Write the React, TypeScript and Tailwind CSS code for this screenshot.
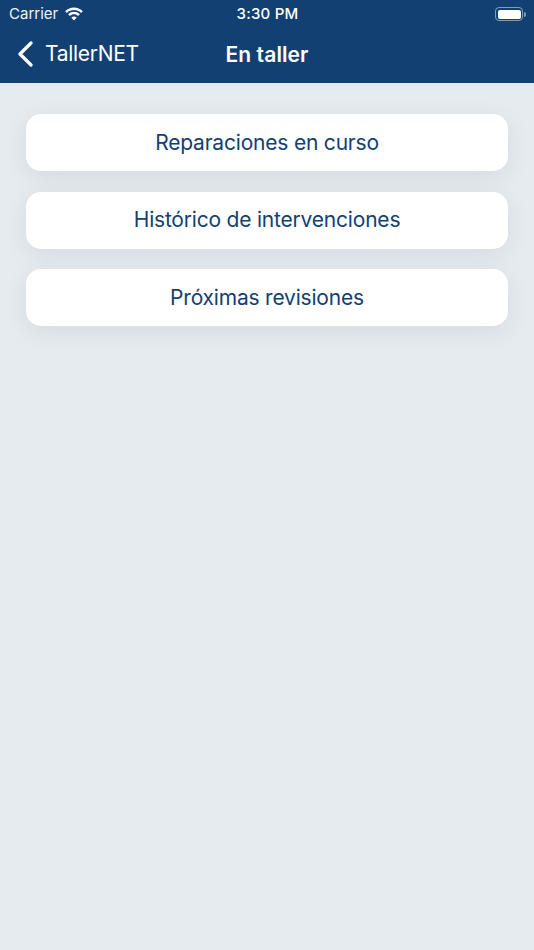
import React from "react";

const OPTIONS = ["Reparaciones en curso", "Histórico de intervenciones", "Próximas revisiones"];

function Wifi() {
	return (
		<svg width="20" height="15" viewBox="0 0 20 15" fill="#fff">
			<path d="M10 3.1c2.7 0 5.2 1 7.1 2.8l1.5-1.5c.1-.1.1-.3 0-.4C16.300 1.700 13.200.5 10 .5S3.700 1.700 1.400 4c-.1.1-.1.300 0 .4l1.500 1.500C4.800 4.100 7.300 3.100 10 3.100z" />
			<path d="M10 7.300c1.600 0 3 .6 4.100 1.600l1.500-1.500c.1-.1.1-.3 0-.4C14.100 5.600 12.100 4.800 10 4.800s-4.100.8-5.600 2.200c-.1.100-.1.300 0 .4l1.500 1.500C7 7.900 8.400 7.300 10 7.300z" />
			<path d="M10 9.400c-1 0-1.900.4-2.600 1-.1.100-.1.300 0 .4l2.400 2.500c.1.100.3.100.4 0l2.400-2.500c.1-.1.1-.3 0-.4-.7-.6-1.600-1-2.600-1z" />
		</svg>
	);
}

function Battery() {
	return (
		<div className="flex items-center gap-[1px]">
			<div className="w-[28px] h-[14px] rounded-[4px] border border-[#7f9bbd] p-[1.500px]">
				<div className="w-full h-full rounded-[2px] bg-white" />
			</div>
			<div className="w-[1.500px] h-[5px] rounded-r-sm bg-[#7f9bbd]" />
		</div>
	);
}

export default function App() {
	return (
		<div className="w-[534px] h-[950px] flex flex-col bg-[#e6ebef] font-['Inter','Liberation_Sans',sans-serif] overflow-hidden">
			<div className="h-[83px] shrink-0 bg-[#134072] text-white flex flex-col">
				<div className="h-[28px] grid grid-cols-3 items-center pl-[9px] pr-[8px]">
					<div className="flex items-center gap-[6px] text-[15px] text-[#f1f4f7]">
						<span>Carrier</span>
						<Wifi />
					</div>
					<div className="text-center text-[15px] font-medium tracking-[0.2px]">3:30 PM</div>
					<div className="flex justify-end">
						<Battery />
					</div>
				</div>
				<div className="relative flex-1 flex items-center justify-center pb-[2px]">
					<div className="absolute left-[17px] top-[13px] flex items-center gap-[12px]">
						<svg width="16" height="26" viewBox="0 0 16 26" fill="none" stroke="#fff" strokeWidth="3.200" strokeLinecap="round" strokeLinejoin="round">
							<path d="M14 2 L3 13 L14 24" />
						</svg>
						<span className="text-[21px] leading-[26px] tracking-[-0.3px]">TallerNET</span>
					</div>
					<span className="text-[21px] leading-[26px] font-semibold tracking-[0.1px]">En taller</span>
				</div>
			</div>
			<div className="flex flex-col gap-[20.5px] px-[26px] pt-[31px]">
				{OPTIONS.map((o) => (
					<button
						key={o}
						type="button"
						className="h-[57px] rounded-[15px] bg-white text-[21px] tracking-[-0.2px] text-[#134072] shadow-[0_6px_24px_rgba(30,40,60,0.08)]"
					>
						{o}
					</button>
				))}
			</div>
		</div>
	);
}
